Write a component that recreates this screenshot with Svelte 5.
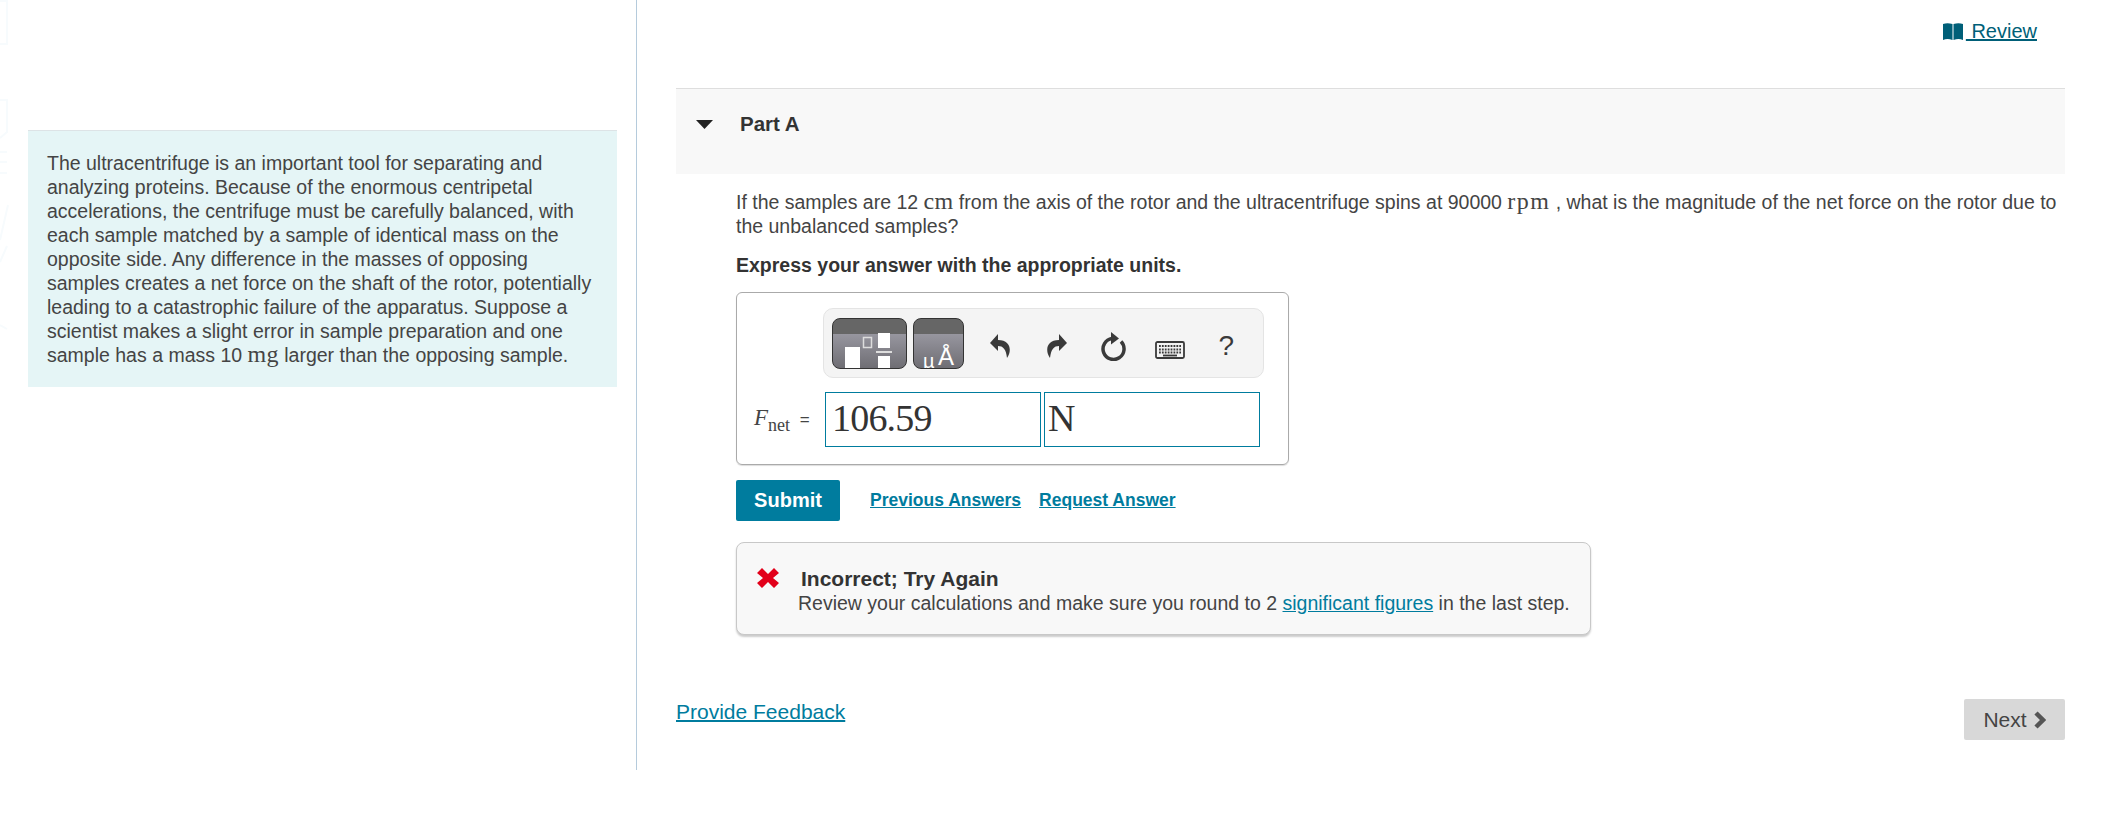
<script>
	let answer = $state('106.59');
	let unit = $state('N');
</script>

<svg class="watermark" viewBox="0 0 10 400" width="10" height="400" aria-hidden="true">
	<path d="M0 1 H7 V44 H0 M0 100 H7 V132 L0 138 M0 152 H7 M0 162 H7 M0 173 H7 M0 240 L8 205 M0 262 L7 246 M0 325 L7 329" fill="none" stroke="#f7fbfd" stroke-width="2" />
</svg>

<div class="page">
	<aside class="left">
		<div class="intro">
			<p>The ultracentrifuge is an important tool for separating and analyzing proteins. Because of the enormous centripetal accelerations, the centrifuge must be carefully balanced, with each sample matched by a sample of identical mass on the opposite side. Any difference in the masses of opposing samples creates a net force on the shaft of the rotor, potentially leading to a catastrophic failure of the apparatus. Suppose a scientist makes a slight error in sample preparation and one sample has a mass 10 <span class="math">mg</span> larger than the opposing sample.</p>
		</div>
	</aside>

	<main class="right">
		<div class="review-row">
			<a class="review" href="#review">
				<svg class="book" viewBox="0 0 20 17" width="20" height="17">
					<path d="M0 1 C3 0 6 0 9.500 1 V17 C6 15.500 3 15.500 0 17 Z" fill="#005f78" />
					<path d="M10.500 1 C14 0 17 0 20 1 V17 C17 15.500 14 15.500 10.500 17 Z" fill="#005f78" />
				</svg>
				<span>&nbsp;Review</span>
			</a>
		</div>

		<section class="part">
			<header class="part-head">
				<svg class="caret" viewBox="0 0 17 9" width="17" height="9"><path d="M0 0 H17 L8.500 9 Z" fill="#222" /></svg>
				<h2>Part A</h2>
			</header>

			<div class="part-body">
				<p class="question">If the samples are 12 <span class="math">cm</span> from the axis of the rotor and the ultracentrifuge spins at 90000 <span class="math rpm">rpm</span> , what is the magnitude of the net force on the rotor due to the unbalanced samples?</p>
				<p class="express">Express your answer with the appropriate units.</p>

				<div class="answer-box">
					<div class="toolbar">
						<button class="tpl wide" aria-label="Templates">
							<svg viewBox="0 0 75 51" width="75" height="51">
								<rect x="13" y="29" width="15" height="22" fill="#fff" />
								<rect x="31.500" y="19.500" width="8" height="10" fill="none" stroke="#ddd" stroke-width="1.500" />
								<rect x="46" y="15" width="12" height="15" fill="#fff" />
								<rect x="44" y="33" width="16" height="2" fill="#ddd" />
								<rect x="46" y="38" width="12" height="13" fill="#fff" />
							</svg>
						</button>
						<button class="tpl narrow" aria-label="Units">
							<span class="mu">µ</span><span class="ang">Å</span>
						</button>
						<div class="tools">
							<span class="tool"><svg viewBox="0 0 21 24" width="21" height="24"><path d="M8 0 L0 9 L8 17 V12 C13 12 16 15 17 24 C22 17 21 6 8 6 Z" fill="#3a3a3a" /></svg></span>
							<span class="tool"><svg viewBox="0 0 21 24" width="21" height="24"><path d="M13 0 L21 9 L13 17 V12 C8 12 5 15 4 24 C-1 17 0 6 13 6 Z" fill="#3a3a3a" /></svg></span>
							<span class="tool"><svg viewBox="0 0 25 29" width="25" height="29"><path d="M20 9.600 A10.500 10.500 0 1 1 11 6.600" fill="none" stroke="#3a3a3a" stroke-width="3.500" /><path d="M10 0 L18 6.500 L10 12.500 Z" fill="#3a3a3a" /></svg></span>
							<span class="tool"><svg class="keys" viewBox="0 0 30 18" width="30" height="18">
								<rect x="1" y="1" width="28" height="16" rx="1.500" fill="none" stroke="#3a3a3a" stroke-width="1.800" />
								<path d="M4 5 H26 M4 8.500 H26 M4 11.500 H26" stroke="#3a3a3a" stroke-width="1.800" stroke-dasharray="1.800 1.100" />
								<path d="M8 14.500 H22" stroke="#3a3a3a" stroke-width="1.800" />
							</svg></span>
							<span class="tool help">?</span>
						</div>
					</div>

					<div class="answer-row">
						<span class="label"><i>F</i><sub>net</sub> <span class="eq">=</span></span>
						<input class="value" bind:value={answer} aria-label="Value" />
						<input class="value unit" bind:value={unit} aria-label="Units" />
					</div>
				</div>

				<div class="actions">
					<button class="submit">Submit</button>
					<a class="action-link first" href="#previous">Previous Answers</a>
					<a class="action-link" href="#request">Request Answer</a>
				</div>

				<div class="feedback">
					<svg class="cross" viewBox="0 0 22 20" width="22" height="20">
						<path d="M5 0 L11 6 L17 0 L22 5 L16 10 L22 15 L17 20 L11 14 L5 20 L0 15 L6 10 L0 5 Z" fill="#e2001a" />
					</svg>
					<div class="feedback-text">
						<strong>Incorrect; Try Again</strong>
						<p>Review your calculations and make sure you round to 2 <a href="#figures">significant figures</a> in the last step.</p>
					</div>
				</div>
			</div>
		</section>

		<footer class="foot">
			<a class="provide" href="#feedback">Provide Feedback</a>
			<button class="next">Next
				<svg viewBox="0 0 13 18" width="13" height="18"><path d="M3 2 L10 9 L3 16" fill="none" stroke="#555" stroke-width="4.500" /></svg>
			</button>
		</footer>
	</main>
</div>

<style>
	:global(body) {
		background: #fff;
		font-family: "Liberation Sans", Arial, sans-serif;
		color: #444;
	}

	.watermark {
		position: absolute;
		left: 0;
		top: 0;
	}

	.page {
		display: flex;
		align-items: flex-start;
		width: 2122px;
	}

	.left {
		box-sizing: border-box;
		width: 637px;
		height: 770px;
		padding: 130px 19px 0 28px;
		border-right: 1px solid #b5cbdc;
	}

	.intro {
		box-sizing: border-box;
		height: 257px;
		padding: 20px 19px;
		background: #e5f5f6;
		border-top: 1px solid #dde3e6;
		font-size: 19.5px;
		line-height: 24px;
		color: #444;
	}

	.intro p,
	.question,
	.express,
	.feedback p {
		margin: 0;
	}

	.math {
		font-family: "Liberation Serif", serif;
		font-size: 24px;
		letter-spacing: 0.3px;
		line-height: 0;
	}

	.rpm {
		letter-spacing: 1.4px;
	}

	.right {
		box-sizing: border-box;
		width: 1428px;
		padding-left: 39px;
	}

	.review-row {
		display: flex;
		justify-content: flex-end;
		height: 88px;
		padding: 20px 28px 0 0;
		box-sizing: border-box;
	}

	.review {
		display: flex;
		align-items: center;
		height: 22px;
		gap: 3px;
		font-size: 20px;
		color: #005f78;
	}

	.part-head {
		display: flex;
		box-sizing: border-box;
		height: 86px;
		padding: 23px 0 0 20px;
		gap: 27px;
		background: #f8f8f8;
		border-top: 1px solid #dedede;
	}

	.caret {
		margin-top: 8px;
	}

	h2 {
		margin: 0;
		font-size: 20.5px;
		line-height: 24px;
		font-weight: bold;
		color: #333;
	}

	.part-body {
		padding: 16px 5px 0 60px;
		font-size: 19.5px;
		line-height: 24px;
	}

	.express {
		margin-top: 15px;
		font-weight: bold;
		color: #333;
	}

	.answer-box {
		box-sizing: border-box;
		width: 553px;
		height: 173px;
		margin-top: 15px;
		padding: 15px 24px 0 17px;
		border: 1px solid #aaa;
		border-radius: 6px;
		box-shadow: 0 1px 1px #ddd;
	}

	.toolbar {
		display: flex;
		align-items: center;
		box-sizing: border-box;
		height: 70px;
		margin-left: 69px;
		padding-left: 8px;
		gap: 6px;
		background: #f4f4f4;
		border: 1px solid #e4e4e4;
		border-radius: 10px;
	}

	.tpl {
		position: relative;
		height: 51px;
		padding: 0;
		overflow: hidden;
		border: 1px solid #333;
		border-radius: 8px;
		background: linear-gradient(#666 0 15px, #97969f 15px, #6f6e74);
	}

	.tpl svg {
		display: block;
		margin: -1px;
	}

	.wide {
		width: 75px;
	}

	.narrow {
		width: 51px;
		color: #fff;
		font-family: "Liberation Sans", sans-serif;
	}

	.mu {
		position: absolute;
		left: 9px;
		bottom: -5px;
		font-size: 20px;
		line-height: 24px;
	}

	.ang {
		position: absolute;
		left: 24px;
		bottom: -4px;
		font-size: 24px;
		line-height: 30px;
	}

	.tools {
		display: flex;
		align-items: center;
		margin-left: 2px;
		padding-top: 6px;
		color: #3a3a3a;
	}

	.tool {
		display: flex;
		align-items: center;
		justify-content: center;
		width: 56.5px;
	}

	.keys {
		margin-top: 8px;
	}

	.help {
		font-size: 28px;
		line-height: 30px;
	}

	.answer-row {
		display: flex;
		align-items: center;
		margin-top: 14px;
		gap: 3px;
	}

	.label {
		width: 68px;
		margin-bottom: 2px;
		font-family: "Liberation Serif", serif;
		font-size: 23px;
		color: #444;
	}

	.label sub {
		font-size: 18px;
		line-height: 0;
	}

	.eq {
		font-family: "Liberation Sans", sans-serif;
		margin-left: 4px;
		font-size: 17px;
	}

	.value {
		box-sizing: border-box;
		width: 216px;
		height: 55px;
		padding: 0 6px 4px;
		border: 1px solid #007c9e;
		border-radius: 0;
		outline: none;
		font-family: "Liberation Serif", serif;
		font-size: 38px;
		letter-spacing: -0.8px;
		color: #333;
		background: #fff;
	}

	.unit {
		padding: 0 3px 4px;
	}

	.actions {
		display: flex;
		align-items: center;
		margin-top: 15px;
		height: 41px;
	}

	.submit {
		box-sizing: border-box;
		width: 104px;
		height: 41px;
		padding: 0;
		border: none;
		border-radius: 2px;
		background: #007c9e;
		color: #fff;
		font-family: inherit;
		font-size: 20px;
		font-weight: bold;
	}

	.action-link {
		margin: -2px 0 0 18px;
		font-size: 17.5px;
		font-weight: bold;
		color: #007c9e;
	}

	.action-link.first {
		margin-left: 30px;
	}

	.feedback {
		display: flex;
		box-sizing: border-box;
		width: 855px;
		height: 93px;
		margin-top: 21px;
		padding: 23px 0 0 20px;
		background: #f8f8f8;
		border: 1px solid #c8c8c8;
		border-radius: 8px;
		box-shadow: 0 2px 2px #ccc;
	}

	.cross {
		flex: none;
		margin-top: 2px;
	}

	.feedback-text {
		margin-left: 22px;
	}

	.feedback strong {
		display: block;
		font-size: 21px;
		line-height: 25px;
		color: #333;
	}

	.feedback p {
		margin-left: -3px;
		color: #444;
	}

	.feedback a {
		color: #007c9e;
	}

	.foot {
		display: flex;
		justify-content: space-between;
		align-items: flex-start;
		margin-top: 64px;
	}

	.provide {
		margin-top: 1px;
		font-size: 21px;
		color: #007c9e;
		line-height: 24px;
		text-decoration-thickness: 2px;
	}

	.next {
		display: flex;
		align-items: center;
		justify-content: center;
		gap: 6px;
		box-sizing: border-box;
		width: 101px;
		height: 41px;
		padding: 0;
		border: none;
		border-radius: 2px;
		background: #d8d8d8;
		color: #444;
		font-family: inherit;
		font-size: 21px;
	}
</style>
